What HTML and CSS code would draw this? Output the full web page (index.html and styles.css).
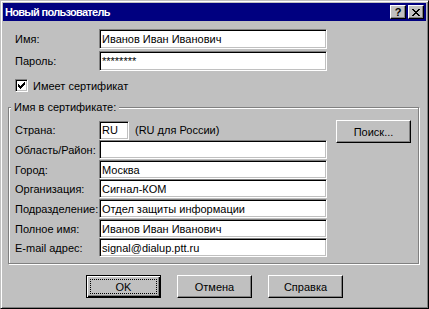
FILE: index.html
```html
<!DOCTYPE html>
<html lang="ru">
<head>
  <meta charset="UTF-8">
  <title>Новый пользователь</title>
  <link rel="stylesheet" href="styles.css">
</head>
<body>

<!-- Dialog window -->
<div class="window">
  <div class="titlebar">
    <span class="title">Новый пользователь</span>
    <div class="caption-buttons">
      <span class="cap-btn help">?</span>
      <span class="cap-btn">
        <svg width="8" height="7" viewBox="0 0 8 7" shape-rendering="crispEdges">
          <path d="M0 0h2v1h-2zM6 0h2v1h-2zM1 1h2v1h-2zM5 1h2v1h-2zM2 2h4v1h-4zM3 3h2v1h-2zM2 4h4v1h-4zM1 5h2v1h-2zM5 5h2v1h-2zM0 6h2v1h-2zM6 6h2v1h-2z" fill="#000"/>
        </svg>
      </span>
    </div>
  </div>

  <div class="client">
    <div class="top-fields">
      <label for="name">Имя:</label>
      <input class="field" id="name" value="Иванов Иван Иванович">
      <label for="pass">Пароль:</label>
      <input class="field" id="pass" value="********">
    </div>

    <div class="check-row">
      <span class="checkbox">
        <svg width="9" height="9" viewBox="0 0 9 9" shape-rendering="crispEdges">
          <path d="M1 3h1v3h-1zM2 4h1v3h-1zM3 5h1v3h-1zM4 4h1v3h-1zM5 3h1v3h-1zM6 2h1v3h-1zM7 1h1v3h-1z" fill="#000"/>
        </svg>
      </span>
      <span>Имеет сертификат</span>
    </div>

    <!-- Group box -->
    <div class="group">
      <span class="group-title">Имя в сертификате:</span>
      <div class="group-grid">
        <label for="country">Страна:</label>
        <div class="country">
          <input class="field short" id="country" value="RU">
          <span class="hint">(RU для России)</span>
        </div>
        <button class="btn search">Поиск...</button>

        <label for="region">Область/Район:</label>
        <input class="field" id="region" value="">

        <label for="city">Город:</label>
        <input class="field" id="city" value="Москва">

        <label for="org">Организация:</label>
        <input class="field" id="org" value="Сигнал-КОМ">

        <label for="dept">Подразделение:</label>
        <input class="field" id="dept" value="Отдел защиты информации">

        <label for="full">Полное имя:</label>
        <input class="field" id="full" value="Иванов Иван Иванович">

        <label for="mail">E-mail адрес:</label>
        <input class="field" id="mail" value="signal@dialup.ptt.ru">
      </div>
    </div>

    <div class="actions">
      <button class="btn default"><span class="focus">OK</span></button>
      <button class="btn">Отмена</button>
      <button class="btn">Справка</button>
    </div>
  </div>
</div>

</body>
</html>
```

FILE: styles.css
```css
* {
  box-sizing: border-box;
}

body {
  margin: 0;
  font-family: "Liberation Sans", Arial, sans-serif;
  font-size: 11px;
  color: #000;
  background: #c0c0c0;
}

/* Window frame */
.window {
  width: 429px;
  height: 309px;
  background: #c0c0c0;
  border: 1px solid;
  border-color: #c0c0c0 #000 #000 #c0c0c0;
  box-shadow: inset 1px 1px #fff, inset -1px -1px #808080;
  padding: 2px;
  display: flex;
  flex-direction: column;
}

.titlebar {
  height: 18px;
  background: #000080;
  display: flex;
  align-items: center;
  justify-content: space-between;
  padding: 0 2px;
}

.title {
  color: #fff;
  font-weight: bold;
  font-size: 11px;
  letter-spacing: -0.7px;
}

.caption-buttons {
  display: flex;
  gap: 2px;
}

.cap-btn {
  width: 16px;
  height: 14px;
  background: #c0c0c0;
  border: 1px solid;
  border-color: #fff #000 #000 #fff;
  box-shadow: inset -1px -1px #808080;
  display: flex;
  align-items: center;
  justify-content: center;
  font-weight: bold;
  font-size: 11px;
  line-height: 1;
}

/* Client area */
.client {
  padding-top: 8px;
}

label {
  align-self: center;
  white-space: nowrap;
}

.field {
  appearance: none;
  margin: 0;
  height: 20px;
  width: 228px;
  padding: 0 2px;
  font: inherit;
  color: #000;
  background: #fff;
  border: 1px solid;
  border-color: #808080 #fff #fff #808080;
  box-shadow: inset 1px 1px #000, inset -1px -1px #c0c0c0;
  outline: none;
}

.top-fields {
  display: grid;
  grid-template-columns: 84px 228px;
  row-gap: 2px;
  margin-left: 12px;
}

.check-row {
  display: flex;
  align-items: center;
  margin: 8px 0 0 12px;
  height: 13px;
}

.checkbox {
  width: 13px;
  height: 13px;
  background: #fff;
  border: 1px solid;
  border-color: #808080 #fff #fff #808080;
  box-shadow: inset 1px 1px #000, inset -1px -1px #c0c0c0;
  display: flex;
  align-items: center;
  justify-content: center;
  margin-right: 5px;
}

/* Group box */
.group {
  position: relative;
  width: 411px;
  margin: 15px 0 0 5px;
  border: 1px solid #808080;
  box-shadow: inset 1px 1px #fff, 1px 1px #fff;
  padding: 12px 0 5px 6px;
}

.group-title {
  position: absolute;
  top: -7px;
  left: 2px;
  padding: 0 3px;
  background: #c0c0c0;
  line-height: 13px;
}

.group-grid {
  display: grid;
  grid-template-columns: 84px 228px 84px;
  grid-template-rows: 20px 20px 19px 20px 20px 19px 20px;
}

.group-grid label {
  grid-column: 1;
}

.group-grid .field,
.group-grid .country {
  grid-column: 2;
}

.group-grid .field {
  height: 19px;
}

.country {
  display: flex;
  align-items: center;
}

.field.short {
  width: 30px;
}

.hint {
  margin-left: 6px;
}

/* Buttons */
.btn {
  width: 75px;
  height: 23px;
  margin: 0;
  padding: 0;
  font: inherit;
  color: #000;
  background: #c0c0c0;
  border: 1px solid;
  border-color: #fff #000 #000 #fff;
  box-shadow: inset -1px -1px #808080;
}

.search {
  grid-row: 1 / span 2;
  grid-column: 3;
  margin-left: 9px;
}

.btn.default {
  border-color: #000;
  box-shadow: inset 1px 1px #fff, inset -1px -1px #000, inset -2px -2px #808080;
  padding: 3px;
}

.focus {
  display: flex;
  align-items: center;
  justify-content: center;
  height: 100%;
  border: 1px dotted #000;
}

.actions {
  display: flex;
  justify-content: center;
  gap: 16px;
  margin-top: 11px;
}
```
